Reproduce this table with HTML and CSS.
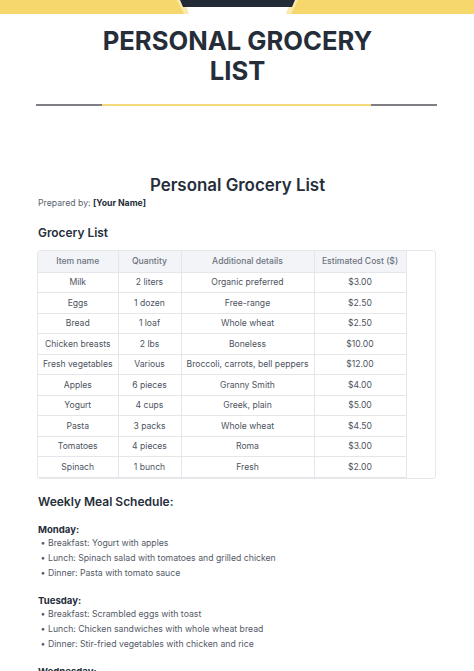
FILE: index.html
```html
<!DOCTYPE html>
<html lang="en">
<head>
<meta charset="utf-8">
<title>Personal Grocery List</title>
<link rel="stylesheet" href="styles.css">
</head>
<body>
<div class="band">
  <svg width="474" height="14" viewBox="0 0 474 14" aria-hidden="true">
    <rect x="0" y="0" width="474" height="14" fill="#f5d76c"/>
    <polygon points="177,0 298,0 291,14 184,14" fill="#f9e9ad"/>
    <polygon points="184,0 291,0 286,14 189,14" fill="#ffffff"/>
    <polygon points="180,0 295,0 292,7 183,7" fill="#222a37"/>
  </svg>
</div>
<main class="page">
  <h1 class="title">PERSONAL GROCERY<br>LIST</h1>
  <div class="divider"><span class="seg gray"></span><span class="seg yellow"></span><span class="seg gray"></span></div>

  <h2 class="doc-title">Personal Grocery List</h2>
  <p class="prepared">Prepared by: <strong>[Your Name]</strong></p>

  <h3 class="section">Grocery List</h3>
  <div class="table-wrap">
    <table class="grocery">
      <colgroup>
        <col class="c1"><col class="c2"><col class="c3"><col class="c4">
      </colgroup>
      <thead>
        <tr><th>Item name</th><th>Quantity</th><th>Additional details</th><th>Estimated Cost ($)</th></tr>
      </thead>
      <tbody>
        <tr><td>Milk</td><td>2 liters</td><td>Organic preferred</td><td>$3.00</td></tr>
        <tr><td>Eggs</td><td>1 dozen</td><td>Free-range</td><td>$2.50</td></tr>
        <tr><td>Bread</td><td>1 loaf</td><td>Whole wheat</td><td>$2.50</td></tr>
        <tr><td>Chicken breasts</td><td>2 lbs</td><td>Boneless</td><td>$10.00</td></tr>
        <tr><td>Fresh vegetables</td><td>Various</td><td>Broccoli, carrots, bell peppers</td><td>$12.00</td></tr>
        <tr><td>Apples</td><td>6 pieces</td><td>Granny Smith</td><td>$4.00</td></tr>
        <tr><td>Yogurt</td><td>4 cups</td><td>Greek, plain</td><td>$5.00</td></tr>
        <tr><td>Pasta</td><td>3 packs</td><td>Whole wheat</td><td>$4.50</td></tr>
        <tr><td>Tomatoes</td><td>4 pieces</td><td>Roma</td><td>$3.00</td></tr>
        <tr><td>Spinach</td><td>1 bunch</td><td>Fresh</td><td>$2.00</td></tr>
      </tbody>
    </table>
  </div>

  <h3 class="section meal">Weekly Meal Schedule:</h3>
  <div class="day">
    <h4 class="day-name">Monday:</h4>
    <ul class="meals">
      <li>Breakfast: Yogurt with apples</li>
      <li>Lunch: Spinach salad with tomatoes and grilled chicken</li>
      <li>Dinner: Pasta with tomato sauce</li>
    </ul>
  </div>
  <div class="day">
    <h4 class="day-name">Tuesday:</h4>
    <ul class="meals">
      <li>Breakfast: Scrambled eggs with toast</li>
      <li>Lunch: Chicken sandwiches with whole wheat bread</li>
      <li>Dinner: Stir-fried vegetables with chicken and rice</li>
    </ul>
  </div>
  <div class="day">
    <h4 class="day-name">Wednesday:</h4>
    <ul class="meals">
      <li>Breakfast: Oatmeal with fresh fruit</li>
      <li>Lunch: Leftover stir-fried vegetables</li>
      <li>Dinner: Grilled chicken with roasted vegetables</li>
    </ul>
  </div>
</main>
</body>
</html>
```

FILE: styles.css
```css
* { box-sizing: border-box; }
html, body { margin: 0; padding: 0; background: #ffffff; }
body {
  font-family: Inter, "Noto Sans", "Liberation Sans", sans-serif;
  color: #262e3b;
  width: 474px;
  overflow: hidden;
}
.band { height: 14px; line-height: 0; }
.band svg { display: block; }

.page { padding: 0 37px 0 38px; }

.title {
  margin: 12px 0 0;
  font-size: 25.6px;
  line-height: 30px;
  font-weight: 700;
  text-align: center;
  color: #252d39;
  letter-spacing: 0;
}

.divider {
  display: flex;
  margin: 18px 0 0 -2px;
  width: 401px;
  height: 2px;
}
.divider .seg { height: 2px; display: block; }
.divider .gray { background: #7d7f84; width: 66px; }
.divider .yellow { background: #f6d97c; flex: 1; }

.doc-title {
  margin: 69px 0 0;
  font-size: 16.9px;
  line-height: 20px;
  font-weight: 600;
  text-align: center;
  color: #262e3b;
}
.prepared {
  margin: 2px 0 0;
  font-size: 8.7px;
  line-height: 12px;
  color: #5b6270;
}
.prepared strong { color: #262e3b; font-weight: 700; }

.section {
  margin: 16px 0 0;
  font-size: 11.9px;
  line-height: 16px;
  font-weight: 600;
  color: #262e3b;
}

.table-wrap {
  margin: 9px 0 0 -1px;
  width: 399px;
  border: 1px solid #e6e8ec;
  border-radius: 3px;
  overflow: hidden;
}
.grocery {
  border-collapse: collapse;
  table-layout: fixed;
  width: 368px;
  font-size: 8.6px;
}
.grocery col.c1 { width: 80px; }
.grocery col.c2 { width: 63px; }
.grocery col.c3 { width: 133px; }
.grocery col.c4 { width: 92px; }
.grocery th, .grocery td {
  text-align: center;
  padding: 0;
  white-space: nowrap;
  border: 1px solid #e4e6ea;
}
.grocery tr > :first-child { border-left: none; }
.grocery thead th {
  border-top: none;
  height: 21px;
  background: #f2f4f7;
  font-weight: 500;
  color: #6d7380;
}
.grocery td {
  height: 20.5px;
  color: #4d5360;
  font-weight: 400;
}

.section.meal {
  margin-top: 14.5px;
  font-size: 12px;
  line-height: 17px;
}
.day { margin-top: 12.5px; }
.day-name {
  margin: 0;
  font-size: 9.6px;
  line-height: 13px;
  font-weight: 700;
  color: #262e3b;
}
.meals {
  list-style: none;
  margin: 0;
  padding: 0;
}
.meals li {
  display: flex;
  font-size: 8.7px;
  line-height: 15.3px;
  color: #545a66;
}
.meals li::before {
  content: "\2022";
  width: 10px;
  flex: none;
  text-align: center;
}
```
